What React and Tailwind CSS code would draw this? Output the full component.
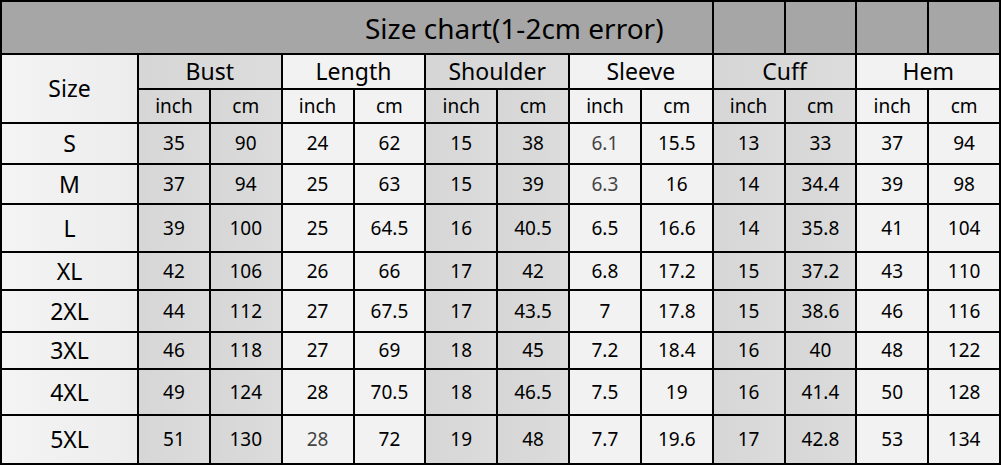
import React from "react";

const groups = ["Bust", "Length", "Shoulder", "Sleeve", "Cuff", "Hem"];

const rows = [
  ["S", ["35", "90", "24", "62", "15", "38", "6.1", "15.5", "13", "33", "37", "94"]],
  ["M", ["37", "94", "25", "63", "15", "39", "6.3", "16", "14", "34.4", "39", "98"]],
  ["L", ["39", "100", "25", "64.5", "16", "40.5", "6.5", "16.6", "14", "35.8", "41", "104"]],
  ["XL", ["42", "106", "26", "66", "17", "42", "6.8", "17.2", "15", "37.2", "43", "110"]],
  ["2XL", ["44", "112", "27", "67.5", "17", "43.5", "7", "17.8", "15", "38.6", "46", "116"]],
  ["3XL", ["46", "118", "27", "69", "18", "45", "7.2", "18.4", "16", "40", "48", "122"]],
  ["4XL", ["49", "124", "28", "70.5", "18", "46.5", "7.5", "19", "16", "41.4", "50", "128"]],
  ["5XL", ["51", "130", "28", "72", "19", "48", "7.7", "19.6", "17", "42.8", "53", "134"]],
];

// cells printed a bit lighter in the chart
const grey = { "S-6": true, "M-6": true, "5XL-2": true };

const shade = (i) =>
  Math.floor(i / 2) % 2 === 0
    ? "bg-gradient-to-r from-[#d6d6d6] to-[#dcdcdc]"
    : "bg-[#f2f2f2]";

const App = () => {
  return (
    <div className="w-[1001px] h-[465px] bg-white font-['Noto_Sans','Open_Sans',sans-serif] text-black">
      <div
        className="grid w-[1001px] h-[465px] bg-black border-2 border-black gap-[2px]
        grid-cols-[135px_repeat(12,minmax(0,1fr))]
        grid-rows-[51px_33px_32px_39px_38px_46px_36px_40px_35px_44px_47px]"
      >
        {/* title row */}
        <div className="col-span-9 bg-[#a6a6a6] flex items-center pl-[363px] text-[28px] leading-none">
          Size chart(1-2cm error)
        </div>
        <div className="bg-[#a6a6a6]"></div>
        <div className="bg-[#a6a6a6]"></div>
        <div className="bg-[#a6a6a6]"></div>
        <div className="bg-[#a6a6a6]"></div>

        {/* group header */}
        <div className="row-span-2 bg-gradient-to-r from-[#f4f4f4] to-[#ececec] flex items-center justify-center text-[23px]">
          Size
        </div>
        {groups.map((g, i) => (
          <div
            key={g}
            className={`col-span-2 flex items-center justify-center text-[23px] ${
              i % 2 === 0 ? "bg-gradient-to-r from-[#d6d6d6] to-[#dcdcdc]" : "bg-[#f2f2f2]"
            }`}
          >
            {g}
          </div>
        ))}

        {/* units */}
        {groups.map((g, i) =>
          ["inch", "cm"].map((u, j) => (
            <div
              key={g + u}
              className={`flex items-center justify-center text-[19px] ${shade(i * 2 + j)}`}
            >
              {u}
            </div>
          ))
        )}

        {/* data */}
        {rows.map(([size, vals]) => (
          <React.Fragment key={size}>
            <div className="bg-gradient-to-r from-[#f4f4f4] to-[#ececec] flex items-center justify-center text-[23px]">
              {size}
            </div>
            {vals.map((v, i) => (
              <div
                key={i}
                className={`flex items-center justify-center text-[19px] ${shade(i)} ${
                  grey[size + "-" + i] ? "text-[#444]" : "text-black"
                }`}
              >
                {v}
              </div>
            ))}
          </React.Fragment>
        ))}
      </div>
    </div>
  );
};

export default App;
